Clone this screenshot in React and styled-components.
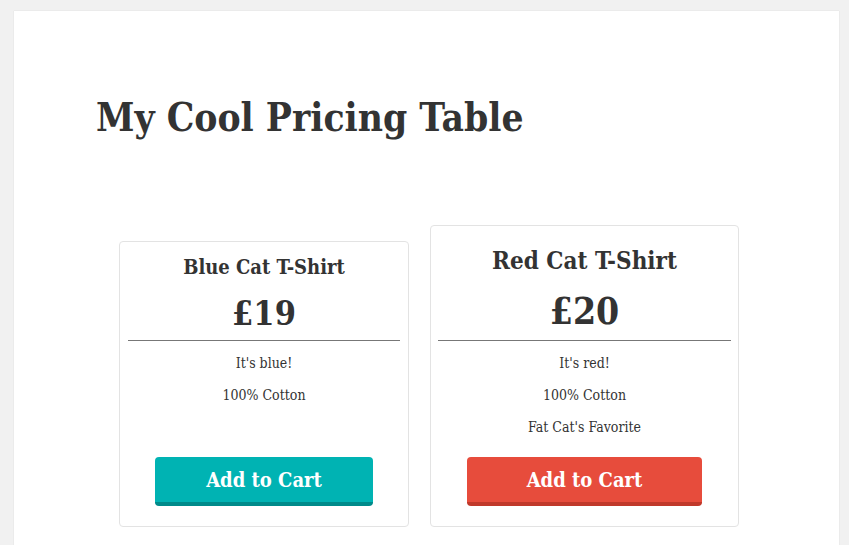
import styled, { createGlobalStyle } from "styled-components";

const GlobalStyle = createGlobalStyle`
  html, body {
    margin: 0;
    padding: 0;
    background: #f1f1f1;
  }
  body {
    font-family: "DejaVu Serif", "Liberation Serif", serif;
    font-stretch: condensed;
    color: #333;
    overflow: hidden;
  }
`;

const products = [
  {
    name: "Blue Cat T-Shirt",
    price: "£19",
    features: ["It's blue!", "100% Cotton"],
    color: "#00b3b3",
    shade: "#008a8a",
    featured: false,
  },
  {
    name: "Red Cat T-Shirt",
    price: "£20",
    features: ["It's red!", "100% Cotton", "Fat Cat's Favorite"],
    color: "#e74c3c",
    shade: "#c0392b",
    featured: true,
  },
];

const App = () => {
  return (
    <>
      <GlobalStyle />
      <Page>
        <Heading>My Cool Pricing Table</Heading>
        <Table>
          {products.map((p) => (
            <Card key={p.name} featured={p.featured}>
              <Title featured={p.featured}>{p.name}</Title>
              <Price featured={p.featured}>{p.price}</Price>
              <Divider />
              <Features>
                {p.features.map((f) => (
                  <Feature key={f}>{f}</Feature>
                ))}
              </Features>
              <CartButton bg={p.color} shade={p.shade}>
                Add to Cart
              </CartButton>
            </Card>
          ))}
        </Table>
      </Page>
    </>
  );
};

const Page = styled.main`
  margin: 11px 10px 0 14px;
  padding: 83px 0 20px 82px;
  background: #fff;
  box-shadow: 0 0 1px rgba(0, 0, 0, 0.15);
`;

const Heading = styled.h1`
  margin: 0;
  font-size: 38.6px;
  line-height: 48px;
  font-weight: 700;
  color: #333;
`;

const Table = styled.div`
  display: flex;
  align-items: flex-end;
  gap: 21px;
  margin-top: 83px;
  padding-left: 23px;
`;

const Card = styled.div`
  box-sizing: border-box;
  width: ${(p) => (p.featured ? "309px" : "290px")};
  padding: ${(p) => (p.featured ? "20px 7px 20px" : "13px 8px 20px")};
  border: 1px solid #e3e3e3;
  border-radius: 4px;
  display: flex;
  flex-direction: column;
  align-items: center;
  text-align: center;
`;

const Title = styled.h3`
  margin: 0;
  font-size: ${(p) => (p.featured ? "24px" : "20px")};
  line-height: ${(p) => (p.featured ? "30px" : "24px")};
  font-weight: 700;
`;

const Price = styled.div`
  margin-top: ${(p) => (p.featured ? "11px" : "12px")};
  font-size: ${(p) => (p.featured ? "37px" : "34px")};
  line-height: ${(p) => (p.featured ? "48px" : "44px")};
  font-weight: 700;
`;

const Divider = styled.hr`
  align-self: stretch;
  margin: 5px 0 0;
  border: 0;
  border-top: 1px solid #777;
`;

const Features = styled.ul`
  list-style: none;
  margin: 6px 0 0;
  padding: 0;
  min-height: 96px;
`;

const Feature = styled.li`
  font-size: 14px;
  line-height: 32px;
`;

const CartButton = styled.button`
  box-sizing: content-box;
  width: 80.5%;
  height: 43px;
  margin-top: 14px;
  padding: 2px 0 0;
  border: 0;
  border-bottom: 4px solid ${(p) => p.shade};
  border-radius: 4px;
  background: ${(p) => p.bg};
  color: #fff;
  font-family: inherit;
  font-stretch: condensed;
  font-size: 20px;
  line-height: 41px;
  font-weight: 700;
  cursor: pointer;
`;

export default App;
